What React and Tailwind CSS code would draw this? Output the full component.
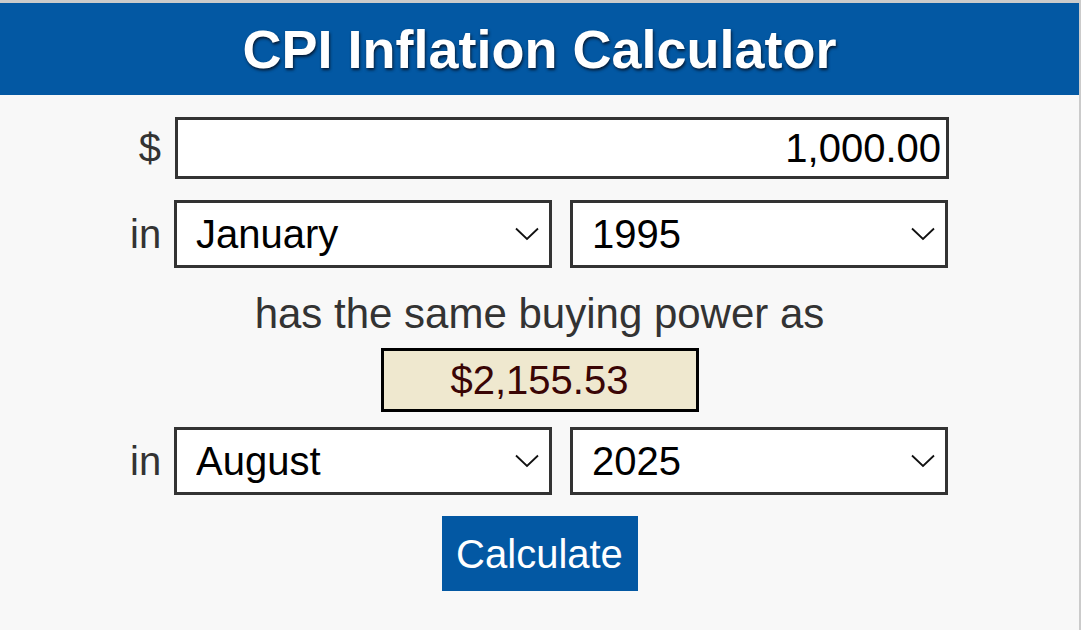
import React, { useState } from 'react';

const months = ["January", "February", "March", "April", "May", "June", "July", "August", "September", "October", "November", "December"];
const years = Array.from({ length: 2025 - 1913 + 1 }, (_, i) => 1913 + i);

const Chevron = () => (
    <svg className='pointer-events-none absolute right-[12px] top-1/2 -translate-y-1/2' width="26" height="15" viewBox="0 0 26 15" fill="none">
        <path d="M2 2 L13 12.5 L24 2" stroke="#111" strokeWidth="1.8" />
    </svg>
)

const Select = ({ value, onChange, options }) => (
    <div className="relative w-[378px]">
        <select
            value={value}
            onChange={e => onChange(e.target.value)}
            className='appearance-none w-full h-[68px] bg-white border-[3px] border-[#333] pl-[19px] text-[40px] text-black outline-none'
        >
            {options.map(o => <option key={o} value={o}>{o}</option>)}
        </select>
        <Chevron />
    </div>
)

const App = () => {
    const [amount, setAmount] = useState("1,000.00")
    const [m1, setM1] = useState("January")
    const [y1, setY1] = useState("1995")
    const [m2, setM2] = useState("August")
    const [y2, setY2] = useState("2025")

    return (
        <div className="min-h-[630px] bg-[#f8f8f8] border-t-[3px] border-r-2 border-[#cbcbcb] font-['Liberation_Sans',Arial,sans-serif]">
            <div className="h-[92px] bg-[#0358a3] flex items-center justify-center">
                <h1 className='text-[54px] font-bold text-white leading-none [text-shadow:1px_2px_3px_#061a33]'>CPI Inflation Calculator</h1>
            </div>

            <div className="w-[819px] mx-auto pt-[22px] text-[#333]">
                <div className="flex items-center">
                    <span className='w-[45px] pr-[14px] text-right text-[40px]'>$</span>
                    <input
                        type="text"
                        value={amount}
                        onChange={e => setAmount(e.target.value)}
                        className='w-[774px] h-[62px] bg-white border-[3px] border-[#333] text-right pr-[5px] text-[40px] text-black outline-none'
                    />
                </div>

                <div className="flex items-center mt-[21px]">
                    <span className='w-[44px] pr-[14px] text-right text-[40px]'>in</span>
                    <div className="flex gap-[18px]">
                        <Select value={m1} onChange={setM1} options={months} />
                        <Select value={y1} onChange={setY1} options={years} />
                    </div>
                </div>

                <p className='text-center text-[42px] mt-[22px] leading-[48px]'>has the same buying power as</p>

                <div className="flex justify-center mt-[10px]">
                    <div className="w-[318px] h-[64px] bg-[#efe8cf] border-[3px] border-black flex items-center justify-center text-[40px] text-[#3a0505]">
                        $2,155.53
                    </div>
                </div>

                <div className="flex items-center mt-[15px]">
                    <span className='w-[44px] pr-[14px] text-right text-[40px]'>in</span>
                    <div className="flex gap-[18px]">
                        <Select value={m2} onChange={setM2} options={months} />
                        <Select value={y2} onChange={setY2} options={years} />
                    </div>
                </div>

                <div className="flex justify-center mt-[21px]">
                    <button className='w-[196px] h-[75px] bg-[#0358a3] text-white text-[40px]'>Calculate</button>
                </div>
            </div>
        </div>
    )
}

export default App
